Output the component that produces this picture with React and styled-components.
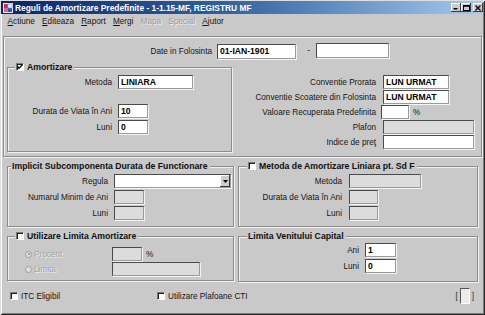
import React from 'react';
import styled, { createGlobalStyle } from 'styled-components';

const GlobalStyle = createGlobalStyle`
  html, body { margin: 0; padding: 0; background: #c9c9c9; }
  body { font-family: "Liberation Sans", Arial, sans-serif; }
`;

const Window = styled.div`
  box-sizing: border-box;
  width: 485px;
  height: 315px;
  padding-top: 1px;
  background: #c9c9c9;
  box-shadow: inset 1px 1px 0 #dedede, inset -1px -1px 0 #262626,
    inset 2px 2px 0 #fff, inset -2px -2px 0 #7c7c7c;
  font-family: "Liberation Sans", Arial, sans-serif;
  font-size: 8.2px;
  color: #151515;
  overflow: hidden;
`;

const TitleBar = styled.div`
  height: 13px;
  margin: 0 2px 0 1px;
  padding-left: 2px;
  display: flex;
  align-items: center;
  background: linear-gradient(to right, #0a246a 0%, #2f5e9c 45%, #a6caf0 100%);
  color: #fff;
  font-weight: bold;
  font-size: 8.4px;
`;

const TitleText = styled.span`
  margin-left: 2px;
  flex: 1;
  white-space: nowrap;
`;

const CaptionButton = styled.span`
  box-sizing: border-box;
  width: 10px;
  height: 9px;
  margin-left: ${p => p.$gap || 0}px;
  display: flex;
  align-items: center;
  justify-content: center;
  background: #cdcdcd;
  box-shadow: inset -1px -1px 0 #3a3a3a, inset 1px 1px 0 #fff;
`;

const MenuBar = styled.div`
  height: 15px;
  padding-left: 4px;
  display: flex;
  align-items: center;
`;

const MenuItem = styled.span`
  padding: 0 3.6px;
  color: ${p => (p.$disabled ? '#9a9a9a' : '#151515')};
  text-shadow: ${p => (p.$disabled ? '1px 1px 0 #efefef' : 'none')};
  u { text-decoration: underline; }
`;

const TopFrame = styled.div`
  box-sizing: border-box;
  width: 479px;
  margin: 7px 0 0 3px;
  padding: 6px 0 4px 3px;
  border: 1px solid #8c8c8c;
  box-shadow: 1px 1px 0 #f2f2f2, inset 1px 1px 0 #f2f2f2;
`;

const DateRow = styled.div`
  height: 15px;
  display: flex;
  align-items: center;
`;

const Dash = styled.span`
  width: 15px;
  text-align: center;
`;

const SplitRow = styled.div`
  display: flex;
  align-items: flex-start;
  margin-top: ${p => p.$mt || 0}px;
`;

const Group = styled.fieldset`
  box-sizing: border-box;
  min-width: 0;
  width: ${p => p.$w}px;
  margin: 0 0 0 ${p => p.$ml || 0}px;
  padding: ${p => p.$pad};
  border: 1px solid #8c8c8c;
  box-shadow: 1px 1px 0 #f2f2f2, inset 1px 1px 0 #f2f2f2;
`;

const Legend = styled.legend`
  height: 10px;
  margin-left: ${p => p.$ml}px;
  padding: 0 2px 0 1px;
  display: flex;
  align-items: center;
  gap: 3px;
  background: #c9c9c9;
  font-weight: bold;
  font-size: 8.7px;
  color: #101010;
  white-space: nowrap;
`;

const FieldCol = styled.div`
  display: flex;
  flex-direction: column;
  gap: ${p => p.$gap ?? 1}px;
  margin: ${p => p.$m || 0};
`;

const Row = styled.div`
  height: 14px;
  display: grid;
  grid-template-columns: ${p => p.$lw}px max-content max-content;
  justify-content: start;
  column-gap: ${p => p.$gap ?? 6}px;
  align-items: center;
  margin-top: ${p => p.$mt || 0}px;
`;

const Label = styled.span`
  text-align: right;
  white-space: nowrap;
`;

const Input = styled.div`
  box-sizing: border-box;
  width: ${p => p.$w}px;
  height: ${p => p.$h || 14}px;
  padding-left: 2px;
  display: flex;
  align-items: center;
  background: ${p => (p.$disabled ? '#dcdcdc' : '#fff')};
  border: 1px solid;
  border-color: #4a4a4a #9a9a9a #9a9a9a #4a4a4a;
  box-shadow: 1px 1px 0 #f4f4f4;
  font-weight: bold;
  font-size: 8.6px;
  color: #000;
  white-space: nowrap;
`;

const DropButton = styled.span`
  box-sizing: border-box;
  width: 10px;
  height: 12px;
  margin-left: auto;
  display: flex;
  align-items: center;
  justify-content: center;
  background: #cdcdcd;
  box-shadow: inset -1px -1px 0 #3a3a3a, inset 1px 1px 0 #fff;
`;

const Unit = styled.span`
  margin-left: -1px;
`;

const CheckBox = styled.span`
  box-sizing: border-box;
  width: 8px;
  height: 8px;
  flex: none;
  display: inline-flex;
  align-items: center;
  justify-content: center;
  background: #fff;
  border: 1px solid;
  border-color: #7a7a7a #fff #fff #7a7a7a;
  box-shadow: inset 1px 1px 0 #1e1e1e;
`;

const RadioRow = styled.div`
  height: 14px;
  display: grid;
  grid-template-columns: 99px max-content max-content;
  justify-content: start;
  column-gap: 5px;
  align-items: center;
`;

const RadioLabel = styled.span`
  display: flex;
  align-items: center;
  gap: 2px;
  padding-left: 17px;
  color: #a4a4a4;
  text-shadow: 1px 1px 0 #ededed;
`;

const Radio = styled.span`
  box-sizing: border-box;
  width: 7px;
  height: 7px;
  border-radius: 50%;
  display: flex;
  align-items: center;
  justify-content: center;
  background: #dedede;
  border: 1px solid #9c9c9c;
  &::after {
    content: '';
    width: 2px;
    height: 2px;
    border-radius: 50%;
    background: ${p => (p.$on ? '#8a8a8a' : 'transparent')};
  }
`;

const Footer = styled.div`
  height: 16px;
  margin-top: 6px;
  padding-left: 10px;
  display: flex;
  align-items: center;
`;

const FooterItem = styled.span`
  width: ${p => (p.$w ? `${p.$w}px` : 'auto')};
  display: flex;
  align-items: center;
  gap: 3px;
`;

const Bracket = styled.span`
  margin-left: auto;
  margin-right: 11px;
  display: flex;
  align-items: center;
  gap: 2px;
  color: #333;
`;

const SmallBox = styled.span`
  box-sizing: border-box;
  width: 10px;
  height: 16px;
  background: #ececec;
  border: 1px solid;
  border-color: #555 #fff #fff #555;
`;

const Check = () => (
  <svg width="6" height="6" viewBox="0 0 6 6">
    <path d="M0.5 2.5 L2 4.2 L5.5 0.6" stroke="#000" strokeWidth="1.3" fill="none" />
  </svg>
);

const AppIcon = () => (
  <svg width="10" height="10" viewBox="0 0 10 10">
    <rect x="0" y="0" width="10" height="10" fill="#e8e8f4" />
    <rect x="1" y="1" width="4" height="4" fill="#d0303a" />
    <rect x="5" y="5" width="4" height="4" fill="#3050c0" />
    <rect x="5" y="1" width="4" height="4" fill="#f0f0f0" stroke="#9090c0" strokeWidth="0.6" />
    <rect x="1" y="5" width="4" height="4" fill="#c070a0" />
  </svg>
);

const Menu = ({ first, rest, disabled }) => (
  <MenuItem $disabled={disabled}>
    {disabled ? first : <u>{first}</u>}
    {rest}
  </MenuItem>
);

const Field = ({ label, value, w, lw, gap, mt, disabled, unit }) => (
  <Row $lw={lw} $gap={gap} $mt={mt}>
    <Label>{label}</Label>
    <Input $w={w} $disabled={disabled}>{value}</Input>
    {unit ? <Unit>{unit}</Unit> : <span />}
  </Row>
);

export default function App() {
  return (
    <>
      <GlobalStyle />
      <Window>
        <TitleBar>
          <AppIcon />
          <TitleText>Reguli de Amortizare Predefinite - 1-1.15-MF, REGISTRU MF</TitleText>
          <CaptionButton>
            <svg width="6" height="5" viewBox="0 0 6 5"><rect x="0.5" y="3" width="4" height="1.5" fill="#000" /></svg>
          </CaptionButton>
          <CaptionButton>
            <svg width="7" height="6" viewBox="0 0 7 6"><rect x="0.5" y="0.5" width="6" height="5" fill="none" stroke="#000" /><rect x="0.5" y="0.5" width="6" height="1.3" fill="#000" /></svg>
          </CaptionButton>
          <CaptionButton $gap={2}>
            <svg width="6" height="6" viewBox="0 0 6 6"><path d="M0.5 0.5 L5.5 5.5 M5.5 0.5 L0.5 5.5" stroke="#000" strokeWidth="1.3" /></svg>
          </CaptionButton>
        </TitleBar>

        <MenuBar>
          <Menu first="A" rest="ctiune" />
          <Menu first="E" rest="diteaza" />
          <Menu first="R" rest="aport" />
          <Menu first="M" rest="ergi" />
          <Menu first="Mapa" disabled />
          <Menu first="Special" disabled />
          <Menu first="A" rest="jutor" />
        </MenuBar>

        <TopFrame>
          <DateRow>
            <Row $lw={205} $gap={5}>
              <Label>Date in Folosinta</Label>
              <Input $w={79} $h={15}>01-IAN-1901</Input>
              <span />
            </Row>
            <Dash>-</Dash>
            <Input $w={73} $h={15} />
          </DateRow>

          <SplitRow $mt={4}>
            <Group $w={227} $pad="3px 0 17px 0">
              <Legend $ml={7}>
                <CheckBox><Check /></CheckBox>
                Amortizare
              </Legend>
              <Field label="Metoda" value="LINIARA" w={75} lw={104} />
              <Field label="Durata de Viata în Ani" value="10" w={30} lw={104} mt={15} />
              <Field label="Luni" value="0" w={30} lw={104} mt={2} />
            </Group>

            <FieldCol $m="13px 0 0 2px">
              <Field label="Conventie Prorata" value="LUN URMAT" w={66} lw={142} gap={7} />
              <Field label="Conventie Scoatere din Folosinta" value="LUN URMAT" w={66} lw={142} gap={7} />
              <Field label="Valoare Recuperata Predefinita" w={28} lw={142} gap={5} unit="%" />
              <Field label="Plafon" w={91} lw={142} gap={7} disabled />
              <Field label="Indice de preţ" w={91} lw={142} gap={7} />
            </FieldCol>
          </SplitRow>
        </TopFrame>

        <SplitRow $mt={4}>
          <Group $w={227} $ml={7} $pad="3px 0 6px 0">
            <Legend $ml={3}>Implicit Subcomponenta Durata de Functionare</Legend>
            <FieldCol $gap={2}>
              <Row $lw={100}>
                <Label>Regula</Label>
                <Input $w={117}>
                  <DropButton>
                    <svg width="5" height="3" viewBox="0 0 5 3"><path d="M0 0 H5 L2.5 3 Z" fill="#000" /></svg>
                  </DropButton>
                </Input>
                <span />
              </Row>
              <Field label="Numarul Minim de Ani" w={30} lw={100} disabled />
              <Field label="Luni" w={30} lw={100} disabled />
            </FieldCol>
          </Group>

          <Group $w={240} $ml={4} $pad="3px 0 6px 0">
            <Legend $ml={8}>
              <CheckBox />
              Metoda de Amortizare Liniara pt. Sd F
            </Legend>
            <FieldCol $gap={2}>
              <Field label="Metoda" w={72} lw={103} gap={7} disabled />
              <Field label="Durata de Viata în Ani" w={29} lw={103} gap={7} disabled />
              <Field label="Luni" w={29} lw={103} gap={7} disabled />
            </FieldCol>
          </Group>
        </SplitRow>

        <SplitRow $mt={4}>
          <Group $w={227} $ml={7} $pad="6px 0 4px 0">
            <Legend $ml={7}>
              <CheckBox />
              Utilizare Limita Amortizare
            </Legend>
            <FieldCol $gap={1}>
              <RadioRow>
                <RadioLabel><Radio $on />Procent</RadioLabel>
                <Input $w={30} $disabled />
                <Unit>%</Unit>
              </RadioRow>
              <RadioRow>
                <RadioLabel><Radio />Limita</RadioLabel>
                <Input $w={88} $disabled />
                <span />
              </RadioRow>
            </FieldCol>
          </Group>

          <Group $w={240} $ml={4} $pad="2px 0 8px 0">
            <Legend $ml={8}>Limita Venitului Capital</Legend>
            <FieldCol $gap={2}>
              <Field label="Ani" value="1" w={31} lw={120} />
              <Field label="Luni" value="0" w={31} lw={120} />
            </FieldCol>
          </Group>
        </SplitRow>

        <Footer>
          <FooterItem $w={147}>
            <CheckBox />
            ITC Eligibil
          </FooterItem>
          <FooterItem>
            <CheckBox />
            Utilizare Plafoane CTI
          </FooterItem>
          <Bracket>
            [<SmallBox />]
          </Bracket>
        </Footer>
      </Window>
    </>
  );
}
